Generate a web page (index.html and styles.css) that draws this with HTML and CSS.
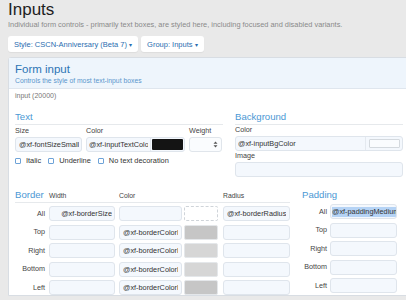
FILE: index.html
```html
<!DOCTYPE html>
<html lang="en">
<head>
    <meta charset="UTF-8">
    <meta name="viewport" content="width=device-width, initial-scale=1.0">
    <title>Inputs</title>
    <link rel="stylesheet" href="styles.css">
</head>
<body>
    <div class="page">
        <h1>Inputs</h1>
        <p class="desc">Individual form controls - primarily text boxes, are styled here, including focused and disabled variants.</p>

        <div class="toolbar">
            <button class="menu-btn">Style: CSCN-Anniversary (Beta 7) <span class="caret">&#9662;</span></button>
            <button class="menu-btn">Group: Inputs <span class="caret">&#9662;</span></button>
        </div>

        <div class="panel">
            <div class="panel-head">
                <h2>Form input</h2>
                <p>Controls the style of most text-input boxes</p>
            </div>

            <div class="panel-body">
                <div class="prop-name">input (20000)</div>

                <div class="top-row">
                    <div class="text-section">
                        <h3 class="section-title">Text</h3>
                        <div class="text-grid">
                            <label>Size</label>
                            <label>Color</label>
                            <label>Weight</label>
                            <input class="field right" type="text" value="@xf-fontSizeSmall">
                            <div class="color-field">
                                <input class="field-inner" type="text" value="@xf-inputTextColor">
                                <span class="swatch-box"><span class="swatch black"></span></span>
                            </div>
                            <div class="select">
                                <svg width="5" height="7" viewBox="0 0 5 7"><path d="M2.5 0.5 L4.5 2.8 H0.5 Z M2.5 6.5 L4.5 4.2 H0.5 Z" fill="#555"/></svg>
                            </div>
                        </div>
                        <div class="checks">
                            <span class="check"><span class="box"></span>Italic</span>
                            <span class="check"><span class="box"></span>Underline</span>
                            <span class="check"><span class="box"></span>No text decoration</span>
                        </div>
                    </div>

                    <div class="bg-section">
                        <h3 class="section-title">Background</h3>
                        <label>Color</label>
                        <div class="color-field wide">
                            <input class="field-inner" type="text" value="@xf-inputBgColor">
                            <span class="swatch-box"><span class="swatch empty"></span></span>
                        </div>
                        <label class="image-label">Image</label>
                        <input class="field" type="text" value="">
                    </div>
                </div>

                <div class="bottom-row">
                    <div class="border-section">
                        <div class="border-head">
                            <h3 class="section-title plain">Border</h3>
                            <label>Width</label>
                            <label>Color</label>
                            <label>Radius</label>
                        </div>
                        <div class="border-grid">
                            <span class="row-label">All</span>
                            <input class="field right" type="text" value="@xf-borderSize">
                            <div class="split">
                                <input class="field" type="text" value="">
                                <span class="swatch dashed"></span>
                            </div>
                            <input class="field" type="text" value="@xf-borderRadiusMedium">

                            <span class="row-label">Top</span>
                            <input class="field" type="text" value="">
                            <div class="split">
                                <input class="field" type="text" value="@xf-borderColorHeavy">
                                <span class="swatch grey-dark"></span>
                            </div>
                            <input class="field" type="text" value="">

                            <span class="row-label">Right</span>
                            <input class="field" type="text" value="">
                            <div class="split">
                                <input class="field" type="text" value="@xf-borderColorLight">
                                <span class="swatch grey-light"></span>
                            </div>
                            <input class="field" type="text" value="">

                            <span class="row-label">Bottom</span>
                            <input class="field" type="text" value="">
                            <div class="split">
                                <input class="field" type="text" value="@xf-borderColorLight">
                                <span class="swatch grey-light"></span>
                            </div>
                            <input class="field" type="text" value="">

                            <span class="row-label">Left</span>
                            <input class="field" type="text" value="">
                            <div class="split">
                                <input class="field" type="text" value="@xf-borderColorHeavy">
                                <span class="swatch grey-dark"></span>
                            </div>
                            <input class="field" type="text" value="">
                        </div>
                    </div>

                    <div class="padding-section">
                        <h3 class="section-title plain pad-title">Padding</h3>
                        <div class="padding-grid">
                            <span class="row-label">All</span>
                            <div class="field selected"><span>@xf-paddingMedium</span></div>
                            <span class="row-label">Top</span>
                            <input class="field" type="text" value="">
                            <span class="row-label">Right</span>
                            <input class="field" type="text" value="">
                            <span class="row-label">Bottom</span>
                            <input class="field" type="text" value="">
                            <span class="row-label">Left</span>
                            <input class="field" type="text" value="">
                        </div>
                    </div>
                </div>
            </div>
        </div>
    </div>
</body>
</html>
```

FILE: styles.css
```css
body {
    margin: 0;
    background-color: #e9e9e9;
    font-family: "Liberation Sans", Arial, sans-serif;
    color: #333;
    overflow: hidden;
}

.page {
    padding-left: 8px;
}

h1 {
    margin: 0;
    font-size: 17px;
    font-weight: normal;
    line-height: 19px;
    color: #1e1e1e;
}

.desc {
    margin: 1px 0 0;
    font-size: 7.4px;
    line-height: 10px;
    color: #8a8a8a;
}

.toolbar {
    display: flex;
    gap: 3px;
    margin-top: 6px;
}

.menu-btn {
    height: 16px;
    padding: 0 6px;
    border: none;
    border-radius: 3px;
    background: #fff;
    color: #2a6db0;
    font-family: inherit;
    font-size: 7.5px;
    box-shadow: 0 1px 1px rgba(0, 0, 0, 0.05);
}

.caret {
    font-size: 6px;
}

.panel {
    margin-top: 5px;
    margin-right: -20px;
    background: #fff;
    border: 1px solid #d8dde3;
    border-radius: 3px 0 0 0;
}

.panel-head {
    background: #eef5fc;
    border-bottom: 1px solid #dfe6ee;
    padding: 4px 6px 3px;
}

.panel-head h2 {
    margin: 0;
    font-size: 11.5px;
    font-weight: normal;
    line-height: 14px;
    color: #2d74b5;
}

.panel-head p {
    margin: 0;
    font-size: 6.8px;
    line-height: 9px;
    color: #5b96cc;
}

.panel-body {
    padding: 0 6px;
}

.prop-name {
    margin-top: 2px;
    font-size: 7px;
    line-height: 10px;
    color: #777;
}

label, .row-label {
    font-size: 7.2px;
    line-height: 10px;
    color: #444;
}

.section-title {
    margin: 10px 0 0;
    padding-bottom: 1px;
    font-size: 9.6px;
    font-weight: normal;
    line-height: 12px;
    color: #4b98d4;
    border-bottom: 1px solid #e6e9ec;
}

.section-title.plain {
    margin: 0;
    border: none;
    padding: 0;
}

.top-row {
    display: flex;
    gap: 12px;
}

.text-section {
    width: 208px;
}

.bg-section {
    display: flex;
    flex-direction: column;
    width: 168px;
}

.text-grid {
    display: grid;
    grid-template-columns: 67px 99px 33px;
    column-gap: 4px;
    row-gap: 1px;
    margin-top: 1px;
}

.field {
    box-sizing: border-box;
    width: 100%;
    height: 15px;
    margin: 0;
    padding: 0 3px;
    border: 1px solid #dfe5ec;
    border-radius: 3px;
    background: #f4f8fd;
    font-family: inherit;
    font-size: 7.3px;
    color: #333;
    outline: none;
    overflow: hidden;
    white-space: nowrap;
}

.field.right {
    text-align: right;
    padding-right: 2px;
}

.color-field {
    display: flex;
    align-items: center;
    box-sizing: border-box;
    height: 15px;
    border: 1px solid #dfe5ec;
    border-radius: 3px;
    background: #f4f8fd;
    overflow: hidden;
}

.color-field .field-inner {
    box-sizing: border-box;
    width: 64px;
    height: 100%;
    margin: 0;
    padding: 0 2px;
    border: none;
    border-right: 1px solid #e4e9ef;
    background: transparent;
    font-family: inherit;
    font-size: 7.3px;
    color: #333;
    outline: none;
}

.color-field.wide {
    margin-top: 1px;
}

.color-field.wide .field-inner {
    width: 130px;
}

.swatch-box {
    flex: 1;
    display: flex;
    align-items: center;
    justify-content: center;
    height: 100%;
}

.swatch {
    display: block;
    box-sizing: border-box;
}

.swatch-box .swatch {
    width: 31px;
    height: 11px;
    border-radius: 1px;
}

.swatch.black {
    background: #141414;
}

.swatch.empty {
    height: 9px;
    border: 1px solid #d4d9de;
    background: #fafcfe;
}

.select {
    box-sizing: border-box;
    height: 15px;
    display: flex;
    align-items: center;
    justify-content: flex-end;
    padding-right: 3px;
    border: 1px solid #e0e5eb;
    border-radius: 3px;
    background: #fafcfe;
}

.checks {
    display: flex;
    gap: 7px;
    margin-top: 4px;
    font-size: 7.4px;
    line-height: 10px;
    color: #333;
}

.check {
    display: flex;
    align-items: center;
}

.box {
    width: 4px;
    height: 4px;
    margin-right: 5px;
    border: 1px solid #6ea3d8;
    border-radius: 1px;
}

.image-label {
    margin-top: 0;
}

.bg-section > .field {
    margin-top: 1px;
}

.bottom-row {
    display: flex;
    gap: 12px;
    margin-top: 12px;
}

.border-head {
    display: grid;
    grid-template-columns: 30px 66px 100px 67px;
    column-gap: 4px;
    align-items: baseline;
    padding-bottom: 1px;
    border-bottom: 1px solid #e6e9ec;
}

.border-head label {
    font-size: 6.8px;
}

.border-grid {
    display: grid;
    grid-template-columns: 30px 66px 100px 67px;
    column-gap: 4px;
    row-gap: 3.6px;
    margin-top: 3px;
    align-items: center;
}

.row-label {
    text-align: right;
}

.split {
    display: flex;
    gap: 2px;
    height: 15px;
}

.split .field {
    width: 63px;
    flex: none;
}

.split .swatch {
    flex: 1;
    border-radius: 2px;
    border: 1px solid #e2e6ea;
    margin: 0 1px 0 0;
}

.swatch.dashed {
    border: 1px dashed #cfd4d9;
    background: #fff;
}

.swatch.grey-dark {
    background: #c6c6c6;
    border-color: #e4e7ea;
}

.swatch.grey-light {
    background: #d6d6d6;
    border-color: #e4e7ea;
}

.padding-section {
    width: 96px;
}

.pad-title {
    padding-bottom: 1px;
    border-bottom: 1px solid #eef0f2;
}

.padding-grid {
    display: grid;
    grid-template-columns: 25px 67px;
    column-gap: 3px;
    row-gap: 3.6px;
    margin-top: 3px;
    align-items: center;
}

.field.selected {
    display: flex;
    align-items: center;
    padding-left: 1px;
}

.field.selected span {
    background: #b5d3f5;
    line-height: 10px;
}
```
